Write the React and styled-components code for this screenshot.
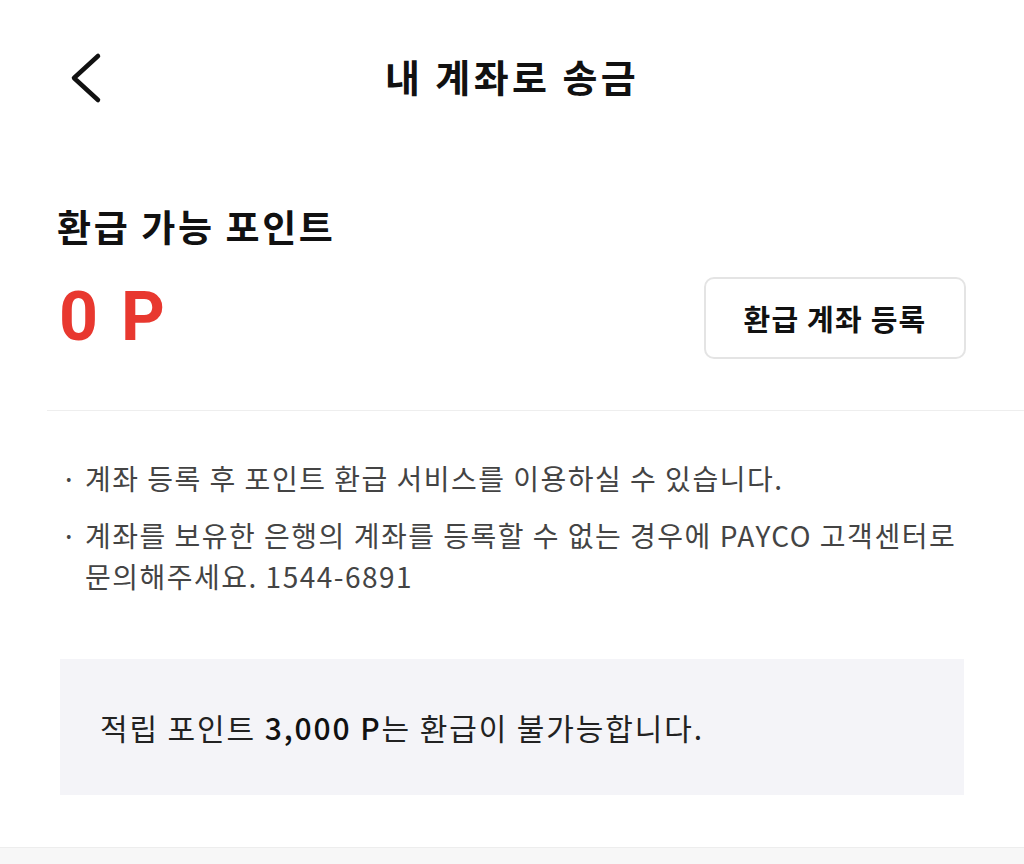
import React from "react";
import styled, { createGlobalStyle } from "styled-components";

const GlobalStyle = createGlobalStyle`
  html, body {
    margin: 0;
    padding: 0;
    background: #fff;
  }
  body {
    font-family: "Noto Sans CJK KR", "Noto Sans", sans-serif;
    color: #111;
  }
`;

const Page = styled.div`
  width: 1024px;
  height: 864px;
  display: flex;
  flex-direction: column;
  overflow: hidden;
`;

const Header = styled.header`
  height: 156px;
  display: flex;
  align-items: flex-start;
  justify-content: center;
  position: relative;
  padding-top: 48px;
  box-sizing: border-box;
`;

const BackButton = styled.button`
  position: absolute;
  left: 62px;
  top: 50px;
  width: 48px;
  height: 56px;
  border: none;
  background: none;
  padding: 0;
  cursor: pointer;
`;

const Title = styled.h1`
  margin: 0;
  font-size: 38px;
  font-weight: 700;
  line-height: 56px;
  letter-spacing: 3.4px;
  color: #111;
`;

const PointSection = styled.section`
  display: flex;
  flex-direction: column;
  margin-left: 47px;
  padding: 45px 58px 51px 10px;
  border-bottom: 1px solid #eeeeee;
`;

const Label = styled.h2`
  margin: 0;
  font-size: 37px;
  font-weight: 700;
  line-height: 50px;
  letter-spacing: 2.6px;
  color: #111;
`;

const AmountRow = styled.div`
  margin-top: 23px;
  display: flex;
  align-items: center;
  justify-content: space-between;
`;

const Amount = styled.div`
  font-family: Roboto, "Noto Sans", sans-serif;
  font-size: 68px;
  font-weight: 700;
  line-height: 80px;
  letter-spacing: 3px;
  color: #e8382f;
  margin-left: 2px;
`;

const RegisterButton = styled.button`
  width: 262px;
  height: 82px;
  margin-top: 3px;
  border: 2px solid #e4e4e4;
  border-radius: 10px;
  background: #fff;
  font-family: "Noto Sans CJK KR", sans-serif;
  font-size: 29px;
  font-weight: 700;
  color: #111;
  letter-spacing: 1.2px;
  cursor: pointer;
`;

const Notes = styled.ul`
  list-style: none;
  margin: 0;
  padding: 47px 50px 0 61px;
  display: flex;
  flex-direction: column;
  gap: 16px;
`;

const Note = styled.li`
  display: flex;
  gap: 14px;
  font-size: 28px;
  line-height: 41px;
  letter-spacing: 1.5px;
  color: #444;
`;

const Dot = styled.span`
  flex: none;
  width: 10px;
`;

const NoticeBox = styled.div`
  margin: 62px 60px 0 60px;
  height: 136px;
  background: #f4f4f8;
  display: flex;
  align-items: center;
  padding: 0 40px;
  font-size: 30px;
  letter-spacing: 1.9px;
  color: #222;
  box-sizing: border-box;
`;

const Strong = styled.span`
  font-weight: 500;
  color: #111;
`;

const BottomBand = styled.div`
  margin-top: auto;
  height: 16px;
  background: #f7f7f7;
  border-top: 1px solid #ededed;
`;

function ChevronLeft() {
  return (
    <svg width="48" height="56" viewBox="0 0 48 56" fill="none">
      <path
        d="M36 6 L12 28 L36 50"
        stroke="#111"
        strokeWidth="4.5"
        strokeLinecap="round"
        strokeLinejoin="round"
      />
    </svg>
  );
}

export default function App() {
  return (
    <Page>
      <GlobalStyle />
      <Header>
        <BackButton aria-label="뒤로">
          <ChevronLeft />
        </BackButton>
        <Title>내 계좌로 송금</Title>
      </Header>

      <PointSection>
        <Label>환급 가능 포인트</Label>
        <AmountRow>
          <Amount>0 P</Amount>
          <RegisterButton>환급 계좌 등록</RegisterButton>
        </AmountRow>
      </PointSection>

      <Notes>
        <Note>
          <Dot>·</Dot>
          <span>계좌 등록 후 포인트 환급 서비스를 이용하실 수 있습니다.</span>
        </Note>
        <Note>
          <Dot>·</Dot>
          <span>
            계좌를 보유한 은행의 계좌를 등록할 수 없는 경우에 PAYCO 고객센터로
            문의해주세요. 1544-6891
          </span>
        </Note>
      </Notes>

      <NoticeBox>
        <span>
          적립 포인트 <Strong>3,000 P</Strong>는 환급이 불가능합니다.
        </span>
      </NoticeBox>

      <BottomBand />
    </Page>
  );
}
